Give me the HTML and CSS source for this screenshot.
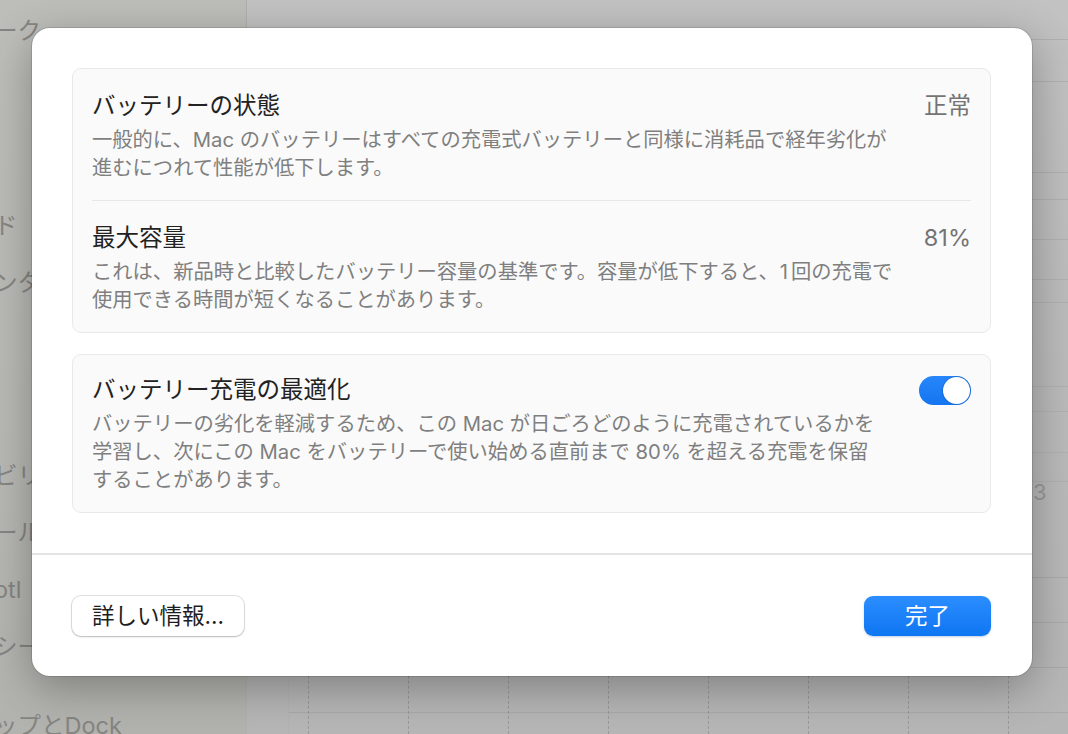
FILE: index.html
```html
<!DOCTYPE html>
<html lang="ja">
<head>
<meta charset="utf-8">
<title>バッテリーの状態</title>
<link rel="stylesheet" href="styles.css">
</head>
<body>
<div class="window">
  <aside class="sidebar">
    <div class="side-item">ーク</div>
    <div class="side-gap g1"></div>
    <div class="side-item">ド</div>
    <div class="side-item">ンタ</div>
    <div class="side-gap g2"></div>
    <div class="side-item">ビリ</div>
    <div class="side-item">ール</div>
    <div class="side-item">otl</div>
    <div class="side-item">シー</div>
    <div class="side-gap g3"></div>
    <div class="side-item">ップとDock</div>
  </aside>
  <main class="content">
    <div class="list">
      <div class="line h40"></div>
      <div class="line h42"></div>
      <div class="line h91"></div>
      <div class="line h27"></div>
      <div class="line h40"></div>
      <div class="line h40"></div>
      <div class="line h23"></div>
      <div class="line h84"></div>
      <div class="line h25"></div>
      <div class="line h41"></div>
      <div class="line h29"></div>
      <div class="line-last"><span class="axis-label">3</span></div>
    </div>
    <div class="chart">
      <div class="col"></div><div class="col"></div><div class="col"></div><div class="col"></div>
      <div class="col"></div><div class="col"></div><div class="col"></div><div class="col"></div>
    </div>
  </main>
</div>

<div class="dialog">
  <div class="dialog-body">
    <section class="card">
      <div class="row">
        <div class="text">
          <div class="title">バッテリーの状態</div>
          <div class="desc">一般的に、Mac のバッテリーはすべての充電式バッテリーと同様に消耗品で経年劣化が<br>進むにつれて性能が低下します。</div>
        </div>
        <div class="value">正常</div>
      </div>
      <div class="row">
        <div class="text">
          <div class="title">最大容量</div>
          <div class="desc">これは、新品時と比較したバッテリー容量の基準です。容量が低下すると、<span class="num">1</span>回の充電で<br>使用できる時間が短くなることがあります。</div>
        </div>
        <div class="value">81%</div>
      </div>
    </section>
    <section class="card card-single">
      <div class="row row-single">
        <div class="text">
          <div class="title">バッテリー充電の最適化</div>
          <div class="desc">バッテリーの劣化を軽減するため、この Mac が日ごろどのように充電されているかを<br>学習し、次にこの Mac をバッテリーで使い始める直前まで 80% を超える充電を保留<br>することがあります。</div>
        </div>
        <div class="toggle"><span class="knob"></span></div>
      </div>
    </section>
  </div>
  <div class="separator"></div>
  <footer class="footer">
    <button class="btn btn-plain">詳しい情報...</button>
    <button class="btn btn-primary">完了</button>
  </footer>
</div>
</body>
</html>
```

FILE: styles.css
```css
* { box-sizing: border-box; }

html, body {
  margin: 0;
  padding: 0;
}

body {
  width: 1068px;
  height: 734px;
  overflow: hidden;
  position: relative;
  background: #bfbfbf;
  font-family: "Inter", "Noto Sans CJK JP", sans-serif;
}

.window {
  display: flex;
  height: 734px;
}

/* ---------- sidebar (dimmed background) ---------- */
.sidebar {
  width: 247px;
  flex: none;
  display: flex;
  flex-direction: column;
  padding-top: 2px;
  background: linear-gradient(180deg, #bdbdb9 0%, #b8b8b4 60%, #b2b2ae 100%);
  border-right: 1px solid #b0b0ad;
  overflow: hidden;
}

.side-item {
  flex: none;
  height: 57px;
  line-height: 57px;
  font-size: 23.5px;
  color: #858582;
  white-space: nowrap;
  margin-left: -6px;
}

.side-gap { flex: none; }
.side-gap.g1 { height: 138px; }
.side-gap.g2 { height: 136px; }
.side-gap.g3 { height: 22px; }

/* ---------- content (dimmed background) ---------- */
.content {
  flex: 1;
  display: flex;
  flex-direction: column;
  background: linear-gradient(180deg, #c2c2c2 0%, #bababa 50%, #b6b6b6 100%);
}

.list {
  flex: none;
  display: flex;
  flex-direction: column;
  height: 560px;
}

.line { border-bottom: 1px solid #b0b0b0; flex: none; }
.h23 { height: 23px; }
.h25 { height: 25px; }
.h27 { height: 27px; }
.h29 { height: 29px; }
.h40 { height: 40px; }
.h41 { height: 41px; }
.h42 { height: 42px; }
.h84 { height: 84px; }
.h91 { height: 91px; }

.line-last {
  flex: 1;
}

.axis-label {
  display: block;
  margin-left: 786px;
  font-size: 22px;
  line-height: 22px;
  margin-top: -1px;
  color: #989898;
}

.chart {
  flex: none;
  height: 174px;
  margin-left: 41px;
  padding-left: 19px;
  display: flex;
  border-left: 1px solid #b3b3b3;
  background:
    repeating-linear-gradient(180deg,
      transparent 0, transparent 17px,
      #a9a9a9 17px, #a9a9a9 18px,
      transparent 18px, transparent 45px);
}

.col {
  width: 100px;
  flex: none;
  border-left: 1px dashed #999999;
}

/* ---------- dialog ---------- */
.dialog {
  position: absolute;
  left: 32px;
  top: 28px;
  width: 1000px;
  height: 648px;
  background: #ffffff;
  border-radius: 18px;
  box-shadow:
    0 0 0 1px rgba(0, 0, 0, 0.12),
    0 12px 44px rgba(0, 0, 0, 0.3);
  display: flex;
  flex-direction: column;
}

.dialog-body {
  padding: 40px 41px 40px 40px;
  display: flex;
  flex-direction: column;
  gap: 21px;
}

.card {
  background: #fafafa;
  border: 1px solid #e9e9e9;
  border-radius: 9px;
}

.row {
  margin: 0 19px;
  padding: 22px 0 18px;
  display: flex;
  justify-content: space-between;
  align-items: flex-start;
}

.row + .row {
  border-top: 1px solid #e7e7e7;
}

.row-single {
  padding: 20px 0 18px;
}

.title {
  font-size: 23.5px;
  line-height: 30px;
  color: #222222;
}

.desc {
  margin-top: 5px;
  font-size: 20.3px;
  line-height: 28px;
  color: #7f7f7f;
  white-space: nowrap;
}

.num {
  padding: 0 3px 0 1px;
}

.value {
  font-size: 23.5px;
  line-height: 30px;
  color: #747474;
}

.toggle {
  margin-top: 1px;
  width: 52px;
  height: 29px;
  border-radius: 15px;
  background: linear-gradient(180deg, #2786fb, #1475f0);
  display: flex;
  justify-content: flex-end;
  align-items: center;
  padding: 1px;
}

.knob {
  width: 27px;
  height: 27px;
  border-radius: 50%;
  background: #ffffff;
  box-shadow: 0 0 0 1px rgba(20, 80, 160, 0.35);
}

.separator {
  height: 2px;
  background: #e4e4e4;
}

.footer {
  flex: 1;
  display: flex;
  justify-content: space-between;
  align-items: flex-start;
  padding: 41px 41px 0 40px;
}

.btn {
  height: 40px;
  border-radius: 9px;
  font-family: "Inter", "Noto Sans CJK JP", sans-serif;
  font-size: 22.5px;
  line-height: 38px;
  padding: 0;
  border: none;
}

.btn-plain {
  width: 172px;
  background: #ffffff;
  color: #1e1e1e;
  box-shadow:
    0 0 0 1px rgba(0, 0, 0, 0.11),
    0 1px 2px rgba(0, 0, 0, 0.18);
}

.btn-primary {
  width: 127px;
  background: linear-gradient(180deg, #2b8dff 0%, #0f76f2 100%);
  color: #ffffff;
  box-shadow: 0 1px 2px rgba(0, 60, 160, 0.25);
}
```
